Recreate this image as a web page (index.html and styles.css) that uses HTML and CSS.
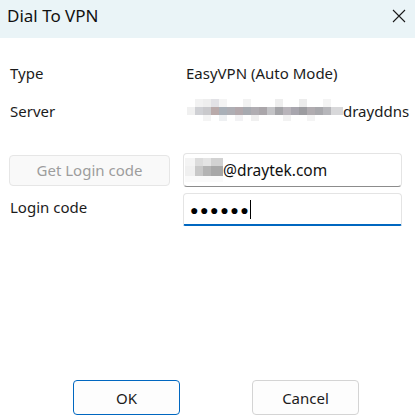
FILE: index.html
```html
<!DOCTYPE html>
<html>
<head>
<meta charset="utf-8">
<link rel="stylesheet" href="styles.css">
</head>
<body>
<div class="window">
  <div class="titlebar">
    <span class="title">Dial To VPN</span>
    <svg class="close" width="14" height="14" viewBox="0 0 14 14"><path d="M1 1L13 13M13 1L1 13" stroke="#1a1a1a" stroke-width="1.1" fill="none"/></svg>
  </div>
  <div class="content">
    <div class="info">
      <span class="label">Type</span>
      <span class="value">EasyVPN (Auto Mode)</span>
      <span class="label">Server</span>
      <span class="value server">
        <svg class="mosaic" width="156" height="24" viewBox="0 0 156 24">
          <rect x="0" y="0" width="156" height="24" fill="#fff"/>
          <rect x="8" y="0" width="8" height="8" fill="#f2f2f2"/>
          <rect x="16" y="0" width="8" height="8" fill="#eeeeee"/>
          <rect x="24" y="0" width="8" height="8" fill="#e2e2e6"/>
          <rect x="32" y="0" width="8" height="8" fill="#f4f4f4"/>
          <rect x="56" y="0" width="8" height="8" fill="#f2f2f2"/>
          <rect x="88" y="0" width="8" height="8" fill="#eeeeee"/>
          <rect x="112" y="0" width="8" height="8" fill="#ececec"/>
          <rect x="136" y="0" width="8" height="8" fill="#f4f4f4"/>
          <rect x="0" y="8" width="8" height="8" fill="#f0f0f0"/>
          <rect x="8" y="8" width="8" height="8" fill="#cfd0d4"/>
          <rect x="16" y="8" width="8" height="8" fill="#c9c9cc"/>
          <rect x="24" y="8" width="8" height="8" fill="#b9aaaa"/>
          <rect x="32" y="8" width="8" height="8" fill="#a9b0b8"/>
          <rect x="40" y="8" width="8" height="8" fill="#aeaeb4"/>
          <rect x="48" y="8" width="8" height="8" fill="#b2a8ac"/>
          <rect x="56" y="8" width="8" height="8" fill="#a7aab0"/>
          <rect x="64" y="8" width="8" height="8" fill="#b0adb2"/>
          <rect x="72" y="8" width="8" height="8" fill="#aaa6aa"/>
          <rect x="80" y="8" width="8" height="8" fill="#c3c3c6"/>
          <rect x="88" y="8" width="8" height="8" fill="#a4a4a8"/>
          <rect x="96" y="8" width="8" height="8" fill="#b8b4ba"/>
          <rect x="104" y="8" width="8" height="8" fill="#a8a6ae"/>
          <rect x="112" y="8" width="8" height="8" fill="#9c9ca0"/>
          <rect x="120" y="8" width="8" height="8" fill="#b0acb0"/>
          <rect x="128" y="8" width="8" height="8" fill="#a8a8ac"/>
          <rect x="136" y="8" width="8" height="8" fill="#b6b6ba"/>
          <rect x="144" y="8" width="12" height="8" fill="#d8d8da"/>
          <rect x="16" y="16" width="8" height="6" fill="#f4f4f4"/>
          <rect x="32" y="16" width="8" height="6" fill="#eef0f2"/>
          <rect x="48" y="16" width="8" height="6" fill="#f2f2f4"/>
          <rect x="64" y="16" width="8" height="6" fill="#f0f0f0"/>
          <rect x="96" y="16" width="8" height="6" fill="#f2f2f2"/>
          <rect x="120" y="16" width="8" height="6" fill="#f4f4f4"/>
        </svg>drayddns</span>
    </div>
    <div class="form">
      <button class="btn getcode" disabled>Get Login code</button>
      <div class="input email">
        <svg class="mosaic" width="38" height="24" viewBox="0 0 38 24">
          <rect x="0" y="0" width="38" height="24" fill="#fff"/>
          <rect x="0" y="0" width="10" height="8" fill="#f4f4f4"/>
          <rect x="10" y="0" width="8" height="8" fill="#dcdcdc"/>
          <rect x="18" y="0" width="8" height="8" fill="#e4e4e4"/>
          <rect x="26" y="0" width="12" height="8" fill="#d2d2d2"/>
          <rect x="0" y="8" width="10" height="10" fill="#f0f0f0"/>
          <rect x="10" y="8" width="8" height="10" fill="#c8c8c8"/>
          <rect x="18" y="8" width="8" height="10" fill="#b4b4b4"/>
          <rect x="26" y="8" width="12" height="10" fill="#a8a8a8"/>
          <rect x="0" y="18" width="38" height="6" fill="#fafafa"/>
        </svg><span>@draytek.com</span>
      </div>
      <span class="label codelabel">Login code</span>
      <div class="input code focused"><span class="dots">●●●●●●</span><span class="caret"></span></div>
    </div>
    <div class="footer">
      <button class="btn ok">OK</button>
      <button class="btn cancel">Cancel</button>
    </div>
  </div>
</div>
</body>
</html>
```
FILE: styles.css
```css
* { box-sizing: border-box; }
html, body { margin: 0; padding: 0; background: #fff; }
body {
  font-family: "Noto Sans", "Open Sans", sans-serif;
  font-size: 15px;
  color: #1b1b1b;
}
.window {
  width: 415px;
  height: 419px;
  display: flex;
  flex-direction: column;
  overflow: hidden;
}
.titlebar {
  height: 38px;
  flex: none;
  background: #eaf4f7;
  display: flex;
  align-items: center;
  justify-content: space-between;
  padding: 0 9px 7px 7px;
}
.title {
  font-size: 17px;
  color: #111;
}
.content {
  flex: 1;
  display: flex;
  flex-direction: column;
  padding: 0 13px 4px 9px;
}
.info {
  display: grid;
  grid-template-columns: 176px 1fr;
  row-gap: 18px;
  margin-top: 25px;
  padding-left: 1px;
}
.info span { height: 20px; line-height: 20px; white-space: nowrap; }
.value { display: flex; align-items: center; }
.value:first-of-type { font-size: 15.5px; }
.server { margin-left: 1px; }
.mosaic { display: block; flex: none; }
.form {
  display: grid;
  grid-template-columns: 161px 219px;
  column-gap: 13px;
  row-gap: 6px;
  margin-top: 32px;
  align-items: center;
}
.btn {
  font-family: inherit;
  font-size: 15px;
  border-radius: 4px;
  background: #fdfdfd;
  border: 1px solid #d4d4d4;
  color: #1b1b1b;
  padding: 0;
}
.getcode {
  height: 31px;
  background: #f9f9f9;
  border-color: #e6e6e6;
  color: #9d9d9d;
}
.input {
  height: 34px;
  border: 1px solid #e4e4e4;
  border-bottom: 1px solid #8c8c8c;
  border-radius: 4px;
  display: flex;
  align-items: center;
  padding-left: 1px;
  font-size: 15.5px;
  color: #111;
}
.code {
  height: 33px;
  padding-left: 6px;
}
.focused {
  border-bottom: 2px solid #0067c0;
  border-radius: 4px 4px 2px 2px;
}
.dots { font-size: 14px; letter-spacing: 1.6px; color: #000; }
.caret {
  width: 1px;
  height: 19px;
  background: #000;
  margin-left: 0;
}
.codelabel { padding-left: 1px; margin-top: -5px; }
.footer {
  margin-top: auto;
  display: flex;
  gap: 72px;
  padding-left: 64px;
}
.ok, .cancel { width: 107px; height: 35px; }
.ok { border: 1px solid #0067c0; }
```
